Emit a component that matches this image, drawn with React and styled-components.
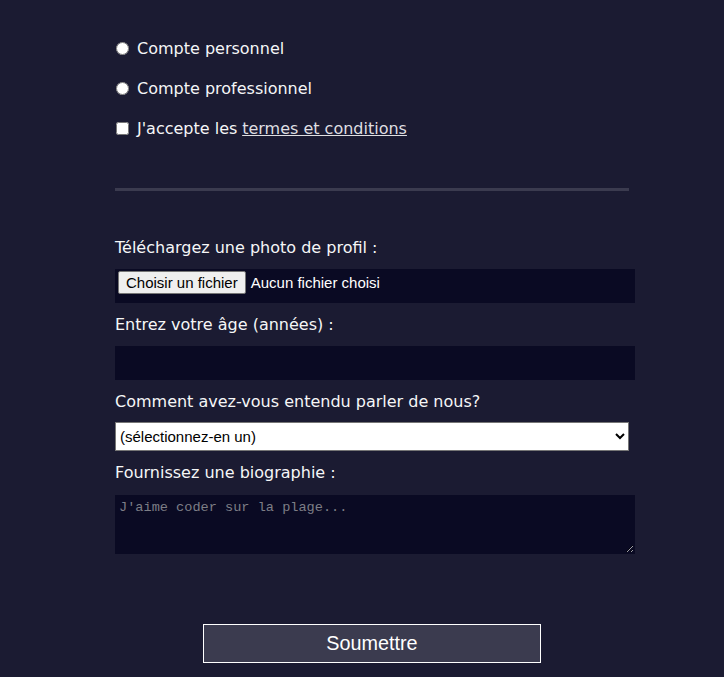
import styled, { createGlobalStyle } from "styled-components";

const GlobalStyle = createGlobalStyle`
  body {
    margin: 0;
    background: #1b1b32;
    color: #f5f6f7;
    font-family: Tahoma, "DejaVu Sans", Verdana, sans-serif;
    font-size: 16px;
  }
`;

const Form = styled.form`
  width: 514px;
  margin-left: 115px;
  padding-bottom: 14px;
`;

const Section = styled.fieldset`
  margin: 0;
  min-width: 0;
  border: none;
  padding: ${p => p.$pad};
  display: flex;
  flex-direction: column;
  gap: ${p => p.$gap}px;
  border-bottom: ${p => (p.$divided ? "3px solid #3b3b4f" : "none")};
`;

const OptionRow = styled.label`
  display: flex;
  align-items: center;
  height: 32px;
  line-height: 21px;
`;

const Choice = styled.input`
  width: 13px;
  height: 13px;
  margin: 0 8px 0 1px;
`;

const TermsLink = styled.a`
  color: #dfdfe2;
  text-decoration: underline;
  margin-left: 0.3em;
`;

const Field = styled.label`
  display: flex;
  flex-direction: column;
`;

const FieldText = styled.span`
  line-height: 21px;
`;

const TextBox = styled.input`
  display: block;
  box-sizing: border-box;
  width: 520px;
  height: 34px;
  margin: 11px 0 0;
  padding: 1px 2px;
  background: #0a0a23;
  border: 1px solid #0a0a23;
  color: #ffffff;
  font: 15px "Liberation Sans", Arial, sans-serif;
  outline: none;
`;

const FileBox = styled.div`
  display: flex;
  align-items: center;
  gap: 5px;
  box-sizing: border-box;
  width: 520px;
  height: 34px;
  margin-top: 11px;
  padding: 1px 2px 8px;
  background: #0a0a23;
  border: 1px solid #0a0a23;
  color: #ffffff;
  font: 15px "Liberation Sans", Arial, sans-serif;
`;

const FileButton = styled.span`
  display: inline-flex;
  align-items: center;
  height: 23px;
  box-sizing: border-box;
  padding: 0 7px;
  background: #efefef;
  border: 1px solid #767676;
  border-radius: 2px;
  color: #000000;
`;

const Picker = styled.select`
  display: block;
  box-sizing: border-box;
  width: 514px;
  height: 29px;
  margin-top: 10px;
  font: 15px "Liberation Sans", Arial, sans-serif;
  color: #000000;
  background: #ffffff;
`;

const Bio = styled.textarea`
  display: block;
  box-sizing: border-box;
  width: 520px;
  height: 59px;
  margin-top: 12px;
  padding: 4px 3px 2px;
  background: #0a0a23;
  border: 1px solid #0a0a23;
  color: #ffffff;
  font: 13.6px "Liberation Mono", "DejaVu Sans Mono", monospace;
  outline: none;

  &::placeholder {
    color: #7d7e86;
  }
`;

const Submit = styled.button`
  display: block;
  width: 338px;
  height: 39px;
  margin: 38px auto 14px;
  background: #3b3b4f;
  border: 1px solid #ffffff;
  color: #ffffff;
  font: 19.8px "Liberation Sans", Arial, sans-serif;
`;

const App = () => {
  return (
    <>
      <GlobalStyle />
      <Form onSubmit={e => e.preventDefault()}>
        <Section $pad="32px 0 44px" $gap={8} $divided>
          <OptionRow>
            <Choice type="radio" name="account" />
            Compte personnel
          </OptionRow>
          <OptionRow>
            <Choice type="radio" name="account" />
            Compte professionnel
          </OptionRow>
          <OptionRow>
            <Choice type="checkbox" />
            J'accepte les<TermsLink href="#terms">termes et conditions</TermsLink>
          </OptionRow>
        </Section>
        <Section $pad="46px 0 32px" $gap={11}>
          <Field as="div">
            <FieldText>Téléchargez une photo de profil :</FieldText>
            <FileBox>
              <FileButton>Choisir un fichier</FileButton>
              Aucun fichier choisi
            </FileBox>
          </Field>
          <Field>
            <FieldText>Entrez votre âge (années) :</FieldText>
            <TextBox type="number" min="13" max="120" />
          </Field>
          <Field>
            <FieldText>Comment avez-vous entendu parler de nous?</FieldText>
            <Picker defaultValue="">
              <option value="">(sélectionnez-en un)</option>
              <option value="1">freeCodeCamp News</option>
              <option value="2">Chaîne YouTube freeCodeCamp</option>
              <option value="3">Forum freeCodeCamp</option>
              <option value="4">Autre</option>
            </Picker>
          </Field>
          <Field>
            <FieldText>Fournissez une biographie :</FieldText>
            <Bio placeholder="J'aime coder sur la plage..." />
          </Field>
        </Section>
        <Submit type="submit">Soumettre</Submit>
      </Form>
    </>
  );
};

export default App;
